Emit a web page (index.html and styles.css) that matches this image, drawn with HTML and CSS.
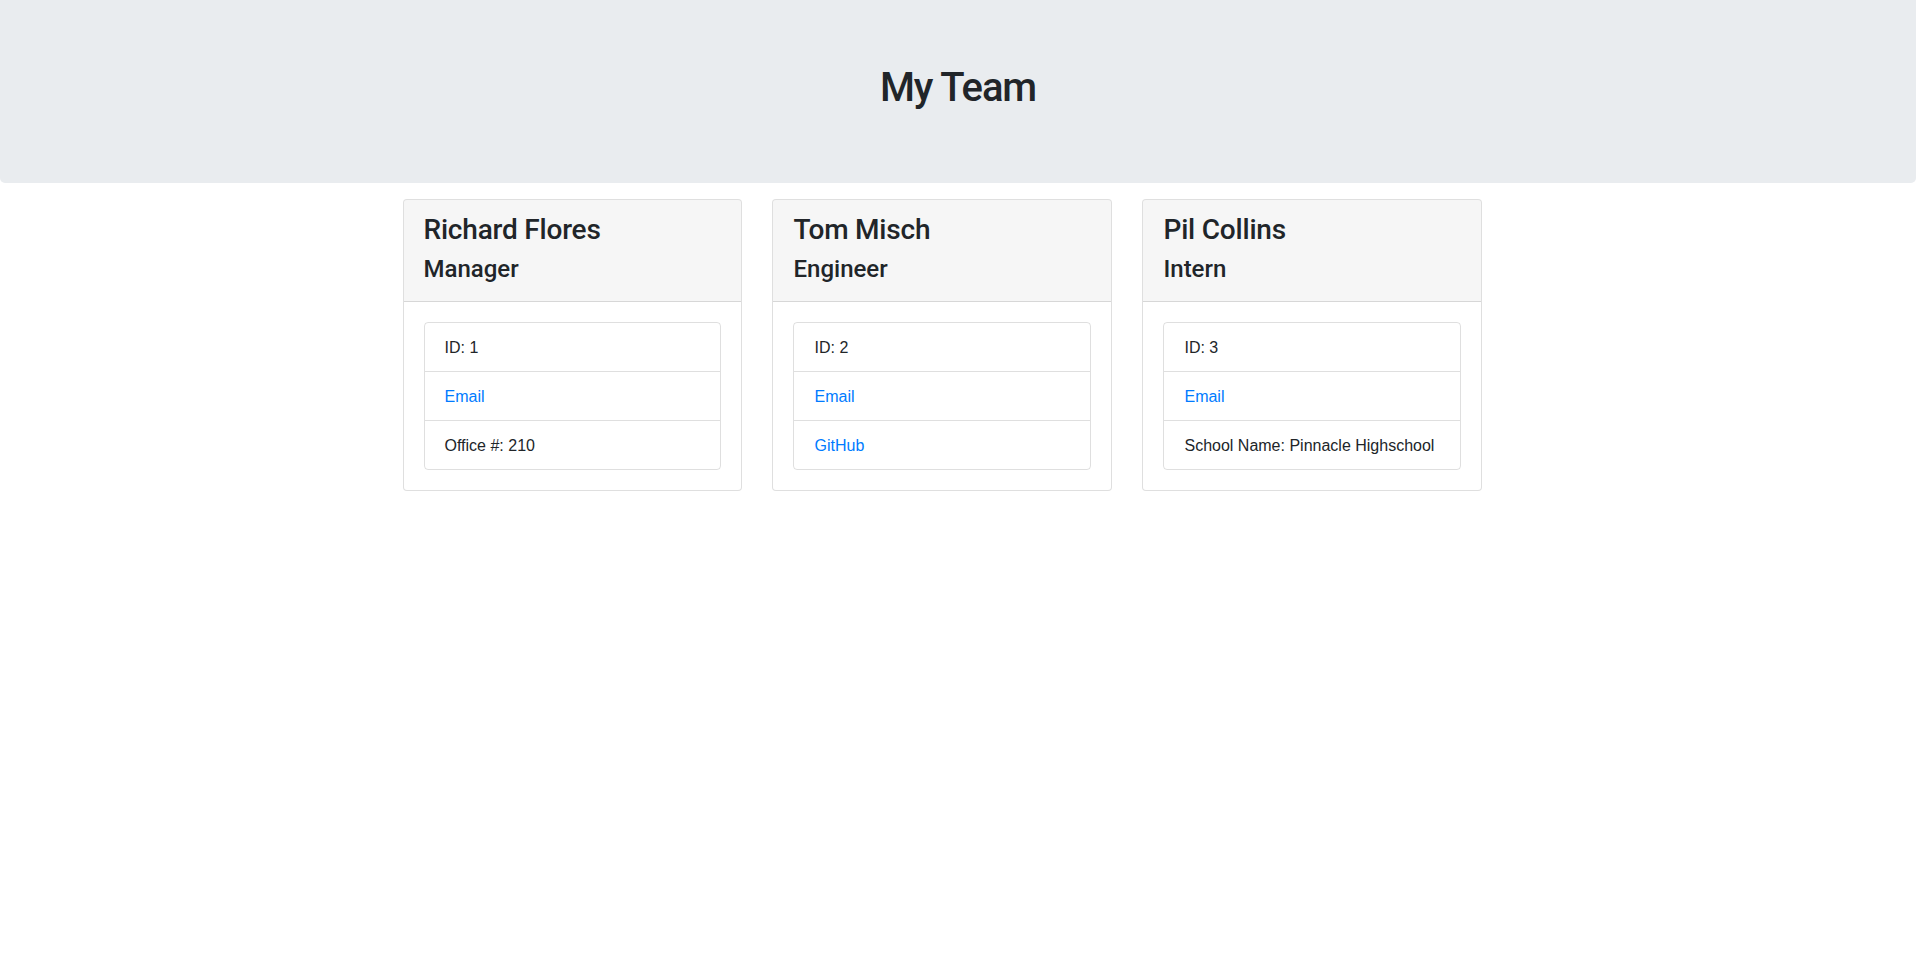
FILE: index.html
```html
<!DOCTYPE html>
<html lang="en">
<head>
<meta charset="utf-8">
<title>My Team</title>
<link rel="stylesheet" href="styles.css">
</head>
<body>
<header class="jumbotron">
  <h1 class="title">My Team</h1>
</header>
<main class="container">
  <div class="row">
    <div class="col">
      <div class="card">
        <div class="card-header">
          <h3 class="name">Richard Flores</h3>
          <h4 class="role">Manager</h4>
        </div>
        <div class="card-body">
          <ul class="list-group">
            <li class="list-group-item">ID: 1</li>
            <li class="list-group-item"><a href="#">Email</a></li>
            <li class="list-group-item">Office #: 210</li>
          </ul>
        </div>
      </div>
    </div>
    <div class="col">
      <div class="card">
        <div class="card-header">
          <h3 class="name">Tom Misch</h3>
          <h4 class="role">Engineer</h4>
        </div>
        <div class="card-body">
          <ul class="list-group">
            <li class="list-group-item">ID: 2</li>
            <li class="list-group-item"><a href="#">Email</a></li>
            <li class="list-group-item"><a href="#">GitHub</a></li>
          </ul>
        </div>
      </div>
    </div>
    <div class="col">
      <div class="card">
        <div class="card-header">
          <h3 class="name">Pil Collins</h3>
          <h4 class="role">Intern</h4>
        </div>
        <div class="card-body">
          <ul class="list-group">
            <li class="list-group-item">ID: 3</li>
            <li class="list-group-item"><a href="#">Email</a></li>
            <li class="list-group-item">School Name: Pinnacle Highschool</li>
          </ul>
        </div>
      </div>
    </div>
  </div>
</main>
</body>
</html>
```

FILE: styles.css
```css
* { box-sizing: border-box; }
html, body { margin: 0; padding: 0; }
body {
  font-family: "Liberation Sans", Arial, sans-serif;
  font-size: 16px;
  line-height: 1.5;
  color: #212529;
  background: #fff;
}
.jumbotron {
  background: #e9ecef;
  padding: 64px 32px 63px;
  margin: 0 1px 16px 0;
  border-radius: 0 0 5px 5px;
}
.title {
  margin: 0 0 8px;
  text-align: center;
  font-family: Roboto, "Liberation Sans", Arial, sans-serif;
  font-size: 40px;
  font-weight: 500;
  line-height: 1.2;
  letter-spacing: -1.1px;
}
.container {
  width: 1140px;
  margin: 0 0 0 calc(50% - 571px);
  padding: 0 15px;
}
.row {
  display: flex;
}
.col {
  flex: 0 0 33.3333%;
  padding-right: 30px;
}
.card {
  border: 1px solid rgba(0,0,0,.125);
  border-radius: 4px;
  background: #fff;
  overflow: hidden;
}
.card-header {
  background: rgba(0,0,0,.035);
  border-bottom: 1px solid rgba(0,0,0,.125);
  padding: 13px 20px 11px;
}
.name {
  margin: 0 0 8px;
  font-family: Roboto, "Liberation Sans", Arial, sans-serif;
  font-size: 28px;
  font-weight: 500;
  line-height: 1.2;
  letter-spacing: -0.2px;
}
.role {
  margin: 0 0 7px;
  font-family: Roboto, "Liberation Sans", Arial, sans-serif;
  font-size: 24px;
  font-weight: 500;
  line-height: 1.2;
}
.card-body {
  padding: 20px;
}
.list-group {
  list-style: none;
  margin: 0;
  padding: 0;
  border: 1px solid rgba(0,0,0,.125);
  border-radius: 4px;
}
.list-group-item {
  padding: 13px 20px 11px;
  border-top: 1px solid rgba(0,0,0,.125);
}
.list-group-item:first-child { border-top: 0; }
.list-group-item a {
  color: #007bff;
  text-decoration: none;
}
```
